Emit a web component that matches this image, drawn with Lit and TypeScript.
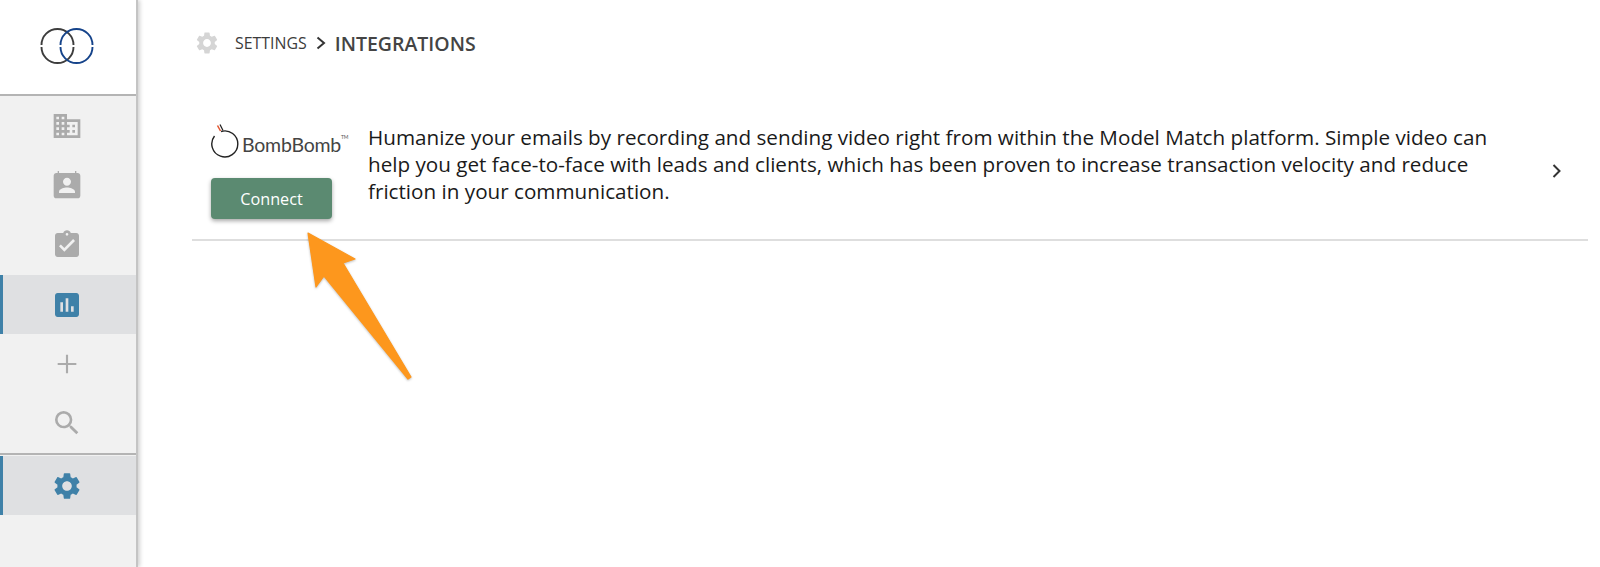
import { LitElement, html, css, svg } from "lit";
import { customElement } from "lit/decorators.js";

const gearPath = "M19.14 12.94c.04-.3.06-.61.06-.94 0-.32-.02-.64-.07-.94l2.03-1.58a.49.49 0 0 0 .12-.61l-1.92-3.32a.488.488 0 0 0-.59-.22l-2.39.96c-.5-.38-1.03-.7-1.62-.94l-.36-2.54a.484.484 0 0 0-.48-.41h-3.84c-.24 0-.43.17-.47.41l-.36 2.54c-.59.24-1.13.57-1.62.94l-2.39-.96c-.22-.08-.47 0-.59.22L2.74 8.87c-.12.21-.08.47.12.61l2.03 1.58c-.05.3-.09.63-.09.94s.02.64.07.94l-2.03 1.58a.49.49 0 0 0-.12.61l1.92 3.32c.12.22.37.29.59.22l2.39-.96c.5.38 1.03.7 1.62.94l.36 2.54c.05.24.24.41.48.41h3.84c.24 0 .44-.17.47-.41l.36-2.54c.59-.24 1.13-.56 1.62-.94l2.39.96c.22.08.47 0 .59-.22l1.92-3.32c.12-.22.07-.47-.12-.61l-2.01-1.58zM12 15.6c-1.98 0-3.6-1.62-3.6-3.6s1.62-3.6 3.6-3.6 3.6 1.62 3.6 3.6-1.62 3.6-3.6 3.6z";

const icon = (size: number, color: string, d: string) =>
  html`<svg width=${size} height=${size} viewBox="0 0 24 24" fill=${color}>${svg`<path d=${d}></path>`}</svg>`;

@customElement("app-root")
export class AppRoot extends LitElement {
  static styles = css`
    :host { display: block; height: 567px; overflow: hidden; position: relative; background: #fff; font-family: "Open Sans", sans-serif; }
    .page { display: flex; height: 567px; }
    .side { width: 136px; flex: none; background: #f1f1f1; border-right: 2px solid #c4c4c4; box-shadow: 2px 0 4px rgba(0,0,0,.18); display: flex; flex-direction: column; }
    .logo { background: #fff; border-bottom: 2px solid #b4b4b4; display: flex; align-items: center; justify-content: center; flex: none; padding: 0 2px 3px 0; height: 91px; }
    .item { height: 59px; flex: none; display: flex; align-items: center; justify-content: center; box-sizing: border-box; padding-right: 2px; }
    .down { padding-top: 3px; }
    .active { background: #dfe0e2; border-left: 3px solid #3f81a8; padding-right: 5px; }
    .sep { height: 2px; background: #b4b4b4; flex: none; }
    .gap1 { height: 1px; flex: none; }
    .gap2 { height: 2px; flex: none; }
    main { flex: 1; min-width: 0; padding: 0 12px 0 54px; }
    .crumbs { height: 86px; display: flex; align-items: center; color: #333; }
    .crumbs svg { flex: none; }
    .crumbs > svg { margin-left: 2px; }
    .s1 { font-size: 15.9px; margin-left: 15px; color: #3c3c3c; }
    .chev { margin: 0 8px 0 8px; display: flex; }
    .s2 { font-size: 19.5px; font-weight: 600; color: #444; }
    .row { display: flex; align-items: flex-start; height: 155px; border-bottom: 2px solid #dedede; box-sizing: border-box; position: relative; }
    .brand { width: 176px; flex: none; padding: 33px 0 0 19px; box-sizing: border-box; display: flex; flex-direction: column; }
    .bomb { display: flex; align-items: center; height: 41px; position: relative; }
    .bomb span { font-family: "Lato", sans-serif; font-weight: 400; font-size: 19.5px; color: #444; letter-spacing: -.2px; line-height: 1; margin: 11px 0 0 -1px; }
    .bomb sup { font-size: 5px; vertical-align: top; color: #555; line-height: 1; }
    button { margin-top: 18px; width: 121px; height: 41px; border: none; border-radius: 4px; background: #5b8a71; color: #fff; font: 400 16.2px "Open Sans", sans-serif; box-shadow: 0 2px 4px rgba(0,0,0,.35); padding: 0; }
    p { margin: 0; padding-top: 38px; width: 1125px; font-size: 20.67px; line-height: 27.2px; color: #1a1a1a; flex: none; }
    .next { position: absolute; left: 1359px; top: 77px; display: flex; }
    .arrow { position: absolute; left: 300px; top: 225px; pointer-events: none; filter: drop-shadow(0 1px 1px rgba(0,0,0,.25)); }
  `;

  render() {
    const grey = "#ababab";
    return html`
      <div class="page">
        <nav class="side">
          <div class="logo">
            <svg width="54" height="38" viewBox="0 0 54 38" fill="none" stroke-width="1.9">
              <path d="M1.500 18A16 16 0 0 1 33.500 18M33.500 20A16 16 0 0 1 1.500 20" stroke="#3d3d3d"></path>
              <path d="M20.500 18A16 16 0 0 1 52.500 18M52.500 20A16 16 0 0 1 20.500 20" stroke="#15438a"></path>
            </svg>
          </div>
          <div class="item">${icon(32, grey, "M12 7V3H2v18h20V7H12zM6 19H4v-2h2v2zm0-4H4v-2h2v2zm0-4H4V9h2v2zm0-4H4V5h2v2zm4 12H8v-2h2v2zm0-4H8v-2h2v2zm0-4H8V9h2v2zm0-4H8V5h2v2zm10 12h-8v-2h2v-2h-2v-2h2v-2h-2V9h8v10zm-2-8h-2v2h2v-2zm0 4h-2v2h2v-2z")}</div>
          <div class="item">${icon(32, grey, "M20 3h-1V1.500h-1V3H6V1.500H5V3H4c-1.100 0-2 .9-2 2v15c0 1.100.9 2 2 2h16c1.100 0 2-.9 2-2V5c0-1.100-.9-2-2-2zm-8 3.500c1.660 0 3 1.340 3 3s-1.340 3-3 3-3-1.340-3-3 1.340-3 3-3zM18 18H6v-1c0-2 4-3.100 6-3.100s6 1.100 6 3.100v1z")}</div>
          <div class="item down">${icon(32, grey, "M19 3h-4.180C14.400 1.840 13.300 1 12 1c-1.300 0-2.400.84-2.820 2H5c-1.100 0-2 .9-2 2v14c0 1.100.9 2 2 2h14c1.100 0 2-.9 2-2V5c0-1.100-.9-2-2-2zm-7 0c.55 0 1 .45 1 1s-.45 1-1 1-1-.45-1-1 .45-1 1-1zm-2 14-4-4 1.410-1.410L10 14.170l6.590-6.590L18 9l-8 8z")}</div>
          <div class="gap2"></div>
          <div class="item active">${icon(32, "#3f81a8", "M19 3H5c-1.100 0-2 .9-2 2v14c0 1.100.9 2 2 2h14c1.100 0 2-.9 2-2V5c0-1.100-.9-2-2-2zM9 17H7v-7h2v7zm4 0h-2V7h2v10zm4 0h-2v-4h2v4z")}</div>
          <div class="item">${icon(32, grey, "M19 12.800h-6.200V19h-1.600v-6.200H5v-1.600h6.200V5h1.600v6.200H19z")}</div>
          <div class="item">${icon(32, grey, "M15.500 14h-.79l-.28-.27A6.470 6.470 0 0 0 16 9.500 6.500 6.500 0 1 0 9.500 16c1.610 0 3.090-.59 4.230-1.570l.27.28v.79l5 4.990L20.490 19l-4.990-5zm-6 0C7.010 14 5 11.990 5 9.500S7.010 5 9.500 5 14 7.010 14 9.500 11.990 14 9.500 14z")}</div>
          <div class="gap1"></div>
          <div class="sep"></div>
          <div class="gap1"></div>
          <div class="item active">${icon(32, "#3f81a8", gearPath)}</div>
        </nav>
        <main>
          <div class="crumbs">
            ${icon(26, "#d5d5d5", gearPath)}
            <span class="s1">SETTINGS</span>
            <span class="chev"><svg width="12" height="14" viewBox="0 0 12 14" fill="none" stroke="#333" stroke-width="2"><path d="M2.500 1.500 9 7l-6.500 5.500"></path></svg></span>
            <span class="s2">INTEGRATIONS</span>
          </div>
          <div class="row">
            <div class="brand">
              <div class="bomb">
                <svg width="32" height="41" viewBox="0 0 32 41" fill="none">
                  <path d="M11 12.500A13 13 0 1 1 4.500 17" stroke="#222" stroke-width="1.400" transform="translate(-1 0)"></path>
                  <path d="M9 5.500 12 11.500" stroke="#222" stroke-width="1.200"></path>
                  <path d="M6.500 6.500 9.500 12" stroke="#e2522b" stroke-width="1.500"></path>
                </svg>
                <span>BombBomb<sup>TM</sup></span>
              </div>
              <button>Connect</button>
            </div>
            <p>Humanize your emails by recording and sending video right from within the Model Match platform. Simple video can help you get face-to-face with leads and clients, which has been proven to increase transaction velocity and reduce friction in your communication.</p>
            <span class="next"><svg width="12" height="16" viewBox="0 0 12 16" fill="none" stroke="#333" stroke-width="2"><path d="M2.500 2 8.500 8l-6 6"></path></svg></span>
          </div>
        </main>
      </div>
      <svg class="arrow" width="120" height="160" viewBox="0 0 120 160">
        <path d="M8 8 55 34 43 38 111 152 108 154 24 51 16 62Z" fill="#fd971d" stroke="#fd971d" stroke-width="1.200" stroke-linejoin="round"></path>
      </svg>
    `;
  }
}
